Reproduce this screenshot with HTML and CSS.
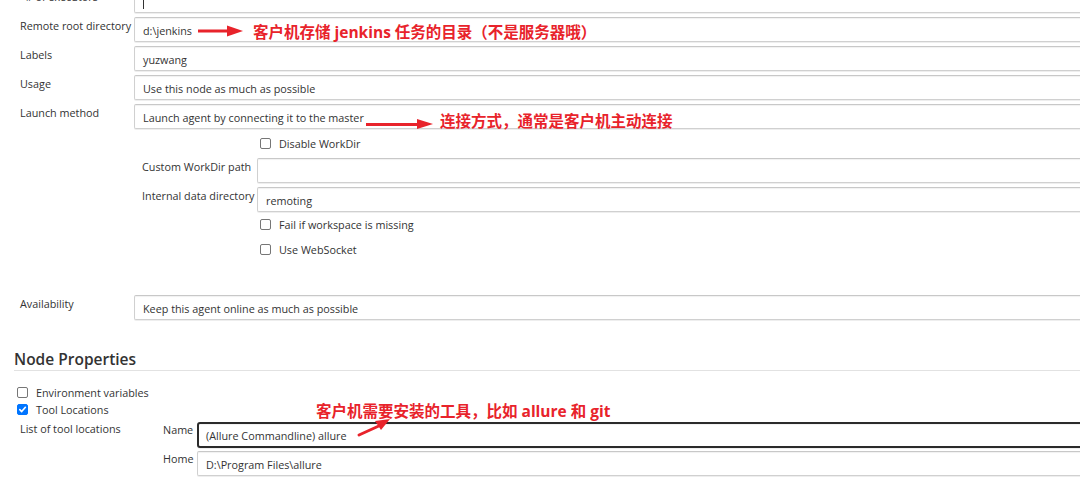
FILE: index.html
```html
<!DOCTYPE html>
<html>
<head>
<meta charset="utf-8">
<link rel="stylesheet" href="styles.css">
</head>
<body>
<div class="page">
  <div class="form">
    <div class="row first">
      <div class="label">&nbsp;&nbsp;# of executors</div>
      <div class="input"><span class="caret"></span></div>
    </div>
    <div class="row">
      <div class="label">Remote root directory</div>
      <div class="input">d:\jenkins</div>
    </div>
    <div class="row">
      <div class="label">Labels</div>
      <div class="input">yuzwang</div>
    </div>
    <div class="row">
      <div class="label">Usage</div>
      <div class="input">Use this node as much as possible</div>
    </div>
    <div class="row">
      <div class="label">Launch method</div>
      <div class="input">Launch agent by connecting it to the master</div>
    </div>
    <div class="sub">
      <div class="check-row"><span class="cb"></span>Disable WorkDir</div>
      <div class="subrow">
        <div class="sublabel">Custom WorkDir path</div>
        <div class="input"></div>
      </div>
      <div class="subrow">
        <div class="sublabel">Internal data directory</div>
        <div class="input">remoting</div>
      </div>
      <div class="check-row c2"><span class="cb"></span>Fail if workspace is missing</div>
      <div class="check-row c3"><span class="cb"></span>Use WebSocket</div>
    </div>
    <div class="row avail">
      <div class="label">Availability</div>
      <div class="input">Keep this agent online as much as possible</div>
    </div>
  </div>

  <h2 class="section">Node Properties</h2>
  <div class="props">
    <div class="pcheck"><span class="cb"></span>Environment variables</div>
    <div class="pcheck"><span class="cb on"><svg viewBox="0 0 10 10" width="9" height="9"><path d="M2 5.2 L4.1 7.3 L8.2 2.6" fill="none" stroke="#fff" stroke-width="1.8" stroke-linecap="round" stroke-linejoin="round"/></svg></span>Tool Locations</div>
    <div class="tools">
      <div class="tlabel">List of tool locations</div>
      <div class="tfields">
        <div class="trow">
          <div class="tname">Name</div>
          <div class="input focus">(Allure Commandline) allure</div>
        </div>
        <div class="trow">
          <div class="tname">Home</div>
          <div class="input">D:\Program Files\allure</div>
        </div>
      </div>
    </div>
  </div>

  <div class="note n1">客户机存储 jenkins 任务的目录（不是服务器哦）</div>
  <div class="note n2">连接方式，通常是客户机主动连接</div>
  <div class="note n3">客户机需要安装的工具，比如 allure 和 git</div>

  <svg class="arrow a1" width="50" height="14" viewBox="0 0 50 14"><path d="M1 7 H34" stroke="#e8232b" stroke-width="3"/><path d="M30 1.5 L46 7 L30 12.5 Z" fill="#e8232b"/></svg>
  <svg class="arrow a2" width="72" height="14" viewBox="0 0 72 14"><path d="M1 7.5 H56" stroke="#e8232b" stroke-width="3"/><path d="M52 2 L68 7 L52 12 Z" fill="#e8232b"/></svg>
  <svg class="arrow a3" width="36" height="22" viewBox="0 0 36 22"><path d="M2 19 L24 9" stroke="#e8232b" stroke-width="3" stroke-linecap="round"/><path d="M18 5 L33 3 L24 14 Z" fill="#e8232b"/></svg>
</div>
</body>
</html>
```

FILE: styles.css
```css
html, body {
  margin: 0;
  padding: 0;
  background: #fff;
  overflow: hidden;
}
.page {
  position: relative;
  width: 1080px;
  height: 482px;
  overflow: hidden;
  font-family: "Open Sans", "Noto Sans", sans-serif;
  font-size: 10.8px;
  color: #333;
}
.form {
  display: flex;
  flex-direction: column;
  gap: 4px;
  margin-top: -12px;
  padding-left: 20px;
}
.row {
  display: grid;
  grid-template-columns: 114px 960px;
  align-items: start;
}
.label {
  padding-top: 2px;
  line-height: 14px;
  white-space: nowrap;
}
.input {
  box-sizing: border-box;
  height: 25px;
  border: 1px solid #d0d0d0;
  border-top-color: #c8c8c8;
  border-radius: 2px;
  box-shadow: inset 0 1px 1px rgba(0,0,0,0.06), 0 1px 0 #eee;
  padding: 0 8px;
  line-height: 26px;
  white-space: nowrap;
  background: #fff;
}
.caret {
  display: inline-block;
  width: 1px;
  height: 12px;
  background: #333;
  vertical-align: middle;
}
.sub {
  display: flex;
  flex-direction: column;
  padding-left: 122px;
}
.check-row {
  display: flex;
  align-items: center;
  padding-left: 118px;
  height: 18px;
  margin-top: 1px;
  margin-bottom: 6px;
}
.check-row.c2 {
  margin-top: -3px;
  margin-bottom: 0;
  height: 22px;
}
.check-row.c3 {
  margin-top: 3px;
  height: 22px;
}
.cb {
  box-sizing: border-box;
  width: 11px;
  height: 11px;
  border: 1px solid #767676;
  border-radius: 2px;
  margin-right: 8px;
  display: inline-flex;
  align-items: center;
  justify-content: center;
  flex: none;
  background: #fff;
}
.cb.on {
  background: #0075ff;
  border-color: #0075ff;
}
.subrow {
  display: grid;
  grid-template-columns: 115px 830px;
  margin-bottom: 4px;
}
.sublabel {
  padding-top: 2px;
  line-height: 14px;
  white-space: nowrap;
}
.avail {
  margin-top: 25px;
}
.section {
  margin: 28px 0 0 14px;
  padding-bottom: 0;
  border-bottom: 1px solid #e2e2e2;
  font-family: "Open Sans", sans-serif;
  font-weight: 600;
  font-size: 15.5px;
  line-height: 22px;
  color: #333;
}
.props {
  padding-left: 17px;
  margin-top: 13px;
}
.pcheck {
  display: flex;
  align-items: center;
  height: 17px;
}
.tools {
  display: grid;
  grid-template-columns: 143px 960px;
  padding-left: 3px;
  margin-top: 1px;
}
.tlabel {
  padding-top: 3px;
  line-height: 14px;
  white-space: nowrap;
}
.tfields {
  display: flex;
  flex-direction: column;
  gap: 3px;
  margin-top: 3px;
}
.trow {
  display: grid;
  grid-template-columns: 34px 960px;
}
.tname {
  padding-top: 1px;
  line-height: 14px;
}
.input.focus {
  border: 2px solid #2b2b2b;
  border-radius: 3px;
  height: 26px;
  padding-left: 7px;
  line-height: 24px;
}
.note {
  position: absolute;
  color: #e8232b;
  font-family: "Open Sans", "Noto Sans CJK SC", sans-serif;
  font-weight: 700;
  font-size: 15.5px;
  line-height: 20px;
  white-space: nowrap;
}
.n1 { left: 253px; top: 22px; }
.n2 { left: 440px; top: 111px; }
.n3 { left: 316px; top: 401px; }
.arrow {
  position: absolute;
}
.a1 { left: 197px; top: 24px; }
.a2 { left: 365px; top: 117px; }
.a3 { left: 357px; top: 416px; }
```
